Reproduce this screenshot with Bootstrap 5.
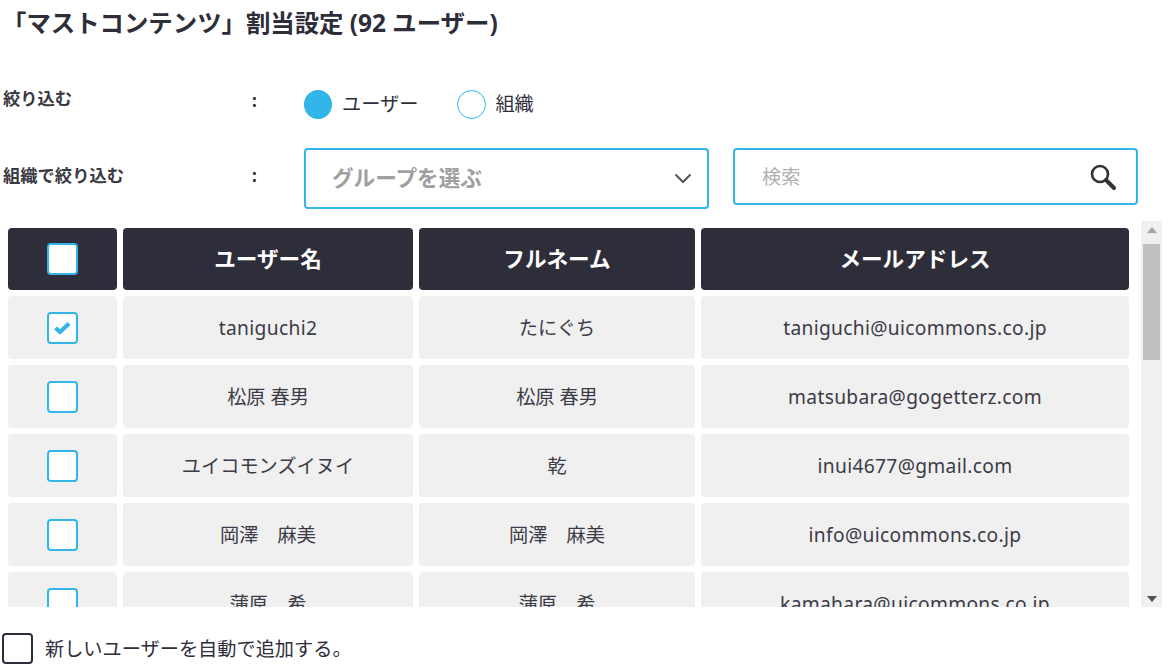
<!DOCTYPE html>
<html lang="ja">
<head>
<meta charset="utf-8">
<title>割当設定</title>
<link href="https://cdn.jsdelivr.net/npm/bootstrap@5.3.0/dist/css/bootstrap.min.css" rel="stylesheet">
<style>
html,body{height:666px;overflow:hidden;}
body{font-family:"Noto Sans","Noto Sans CJK JP",sans-serif;color:#2e2d3a;background:#fff;font-size:19.2px;}
.pg{width:1174px;height:666px;padding:0 12px 0 2px;}
.ttl{font-size:24.4px;font-weight:700;line-height:30px;height:30px;margin:8px 0 0;}
.frow{display:flex;}
.flab{width:249px;font-size:17.3px;font-weight:700;line-height:22px;color:#3a3a42;flex:none;margin-left:1px;}
.fcol{width:52px;font-size:17px;font-weight:700;line-height:22px;flex:none;}
.rr{display:flex;align-items:center;gap:10px;font-size:19.2px;line-height:30px;}
.rdot{width:29px;height:29px;border-radius:50%;border:1px solid #32b5e8;background:#fff;flex:none;}
.rdot.on{background:#32b5e8;width:28px;}
.rtx{margin-right:29px;margin-top:-2px;}
.rtx2{margin-top:-2px;margin-left:-1px;}
.bx{border:2px solid #32b5e8;border-radius:4px;background:#fff;display:flex;align-items:center;justify-content:space-between;}
.sel{width:405px;height:61px;padding:0 15px 0 26px;font-size:21.6px;font-weight:700;color:#a0a0a0;}
.srch{width:405px;height:57px;margin-left:24px;padding:0 19px 0 27px;font-size:19.2px;color:#b0b0b0;}
.srch span{padding-top:2px;}
.tbwrap{height:386px;margin-top:12px;display:flex;width:1160px;}
.tbarea{width:1139px;overflow:hidden;flex:none;}
.gridt{display:grid;grid-template-columns:109px 290px 276px 428px;gap:6px;padding:6px 0 0 6px;grid-auto-rows:63px;}
.cellh{background:#2e2d3a;color:#fff;border-radius:4px;height:62px;align-self:end;font-size:21.6px;font-weight:700;display:flex;align-items:center;justify-content:center;}
.celld{background:#f0f0f0;border-radius:4px;height:63px;font-size:19.2px;display:flex;align-items:center;justify-content:center;color:#3c3b47;}
.celld:not(:has(.ckb)){padding-top:2px;}
.lat{letter-spacing:.33px;}
.ckb{width:31px;height:32px;border:2px solid #32b5e8;border-radius:4px;background:#fff;display:flex;align-items:center;justify-content:center;}
.sbar{width:21px;background:#f0f0f0;display:flex;flex-direction:column;align-items:center;flex:none;}
.sthumb{width:17px;height:116px;background:#c0c0c0;margin-top:6px;}
.sfill{flex:1;}
.arr{height:17px;width:17px;display:flex;align-items:center;justify-content:center;}
.foot{display:flex;align-items:center;gap:12px;margin-top:24px;font-size:19.2px;line-height:32px;}
.foot span+span{padding-top:2px;}
.ckf{width:31px;height:31px;border:2px solid #2e2d3a;border-radius:4px;background:#fff;flex:none;}
</style>
</head>
<body>
<div class="pg">
  <h1 class="ttl">「マストコンテンツ」割当設定 (92 ユーザー)</h1>
  <div class="frow" style="margin-top:52px">
    <div class="flab" style="margin-top:-2px">絞り込む</div>
    <div class="fcol">:</div>
    <div class="rr">
      <span class="rdot on"></span><span class="rtx">ユーザー</span>
      <span class="rdot"></span><span class="rtx2">組織</span>
    </div>
  </div>
  <div class="frow" style="margin-top:29px">
    <div class="flab" style="padding-top:17px">組織で絞り込む</div>
    <div class="fcol" style="padding-top:17px">:</div>
    <div class="bx sel"><span>グループを選ぶ</span>
      <svg width="18" height="11" viewBox="0 0 18 11"><path d="M1.5 1.5 9 9l7.5-7.5" fill="none" stroke="#555" stroke-width="2"/></svg>
    </div>
    <div class="bx srch"><span>検索</span>
      <svg width="28" height="28" viewBox="0 0 28 28"><circle cx="11" cy="11" r="8" fill="none" stroke="#333" stroke-width="2.6"/><path d="M17 17l8 8" stroke="#333" stroke-width="4" stroke-linecap="round"/></svg>
    </div>
  </div>
  <div class="tbwrap">
    <div class="tbarea">
      <div class="gridt">
        <div class="cellh"><span class="ckb"></span></div>
        <div class="cellh">ユーザー名</div>
        <div class="cellh">フルネーム</div>
        <div class="cellh">メールアドレス</div>

        <div class="celld"><span class="ckb"><svg width="18" height="14" viewBox="0 0 18 14"><path d="M1.5 7l4.5 4L15 2.5" fill="none" stroke="#32b5e8" stroke-width="4.2"/></svg></span></div>
        <div class="celld lat">taniguchi2</div>
        <div class="celld">たにぐち</div>
        <div class="celld lat">taniguchi@uicommons.co.jp</div>

        <div class="celld"><span class="ckb"></span></div>
        <div class="celld">松原 春男</div>
        <div class="celld">松原 春男</div>
        <div class="celld lat">matsubara@gogetterz.com</div>

        <div class="celld"><span class="ckb"></span></div>
        <div class="celld">ユイコモンズイヌイ</div>
        <div class="celld">乾</div>
        <div class="celld lat">inui4677@gmail.com</div>

        <div class="celld"><span class="ckb"></span></div>
        <div class="celld">岡澤　麻美</div>
        <div class="celld">岡澤　麻美</div>
        <div class="celld lat">info@uicommons.co.jp</div>

        <div class="celld"><span class="ckb"></span></div>
        <div class="celld">蒲原　希</div>
        <div class="celld">蒲原　希</div>
        <div class="celld lat">kamahara@uicommons.co.jp</div>
      </div>
    </div>
    <div class="sbar">
      <div class="arr"><svg width="10" height="6" viewBox="0 0 10 6"><path d="M5 0l5 6H0z" fill="#a3a3a3"/></svg></div>
      <div class="sthumb"></div>
      <div class="sfill"></div>
      <div class="arr"><svg width="10" height="6" viewBox="0 0 10 6"><path d="M0 0h10L5 6z" fill="#505050"/></svg></div>
    </div>
  </div>
  <div class="foot"><span class="ckf"></span><span>新しいユーザーを自動で追加する。</span></div>
</div>
</body>
</html>
